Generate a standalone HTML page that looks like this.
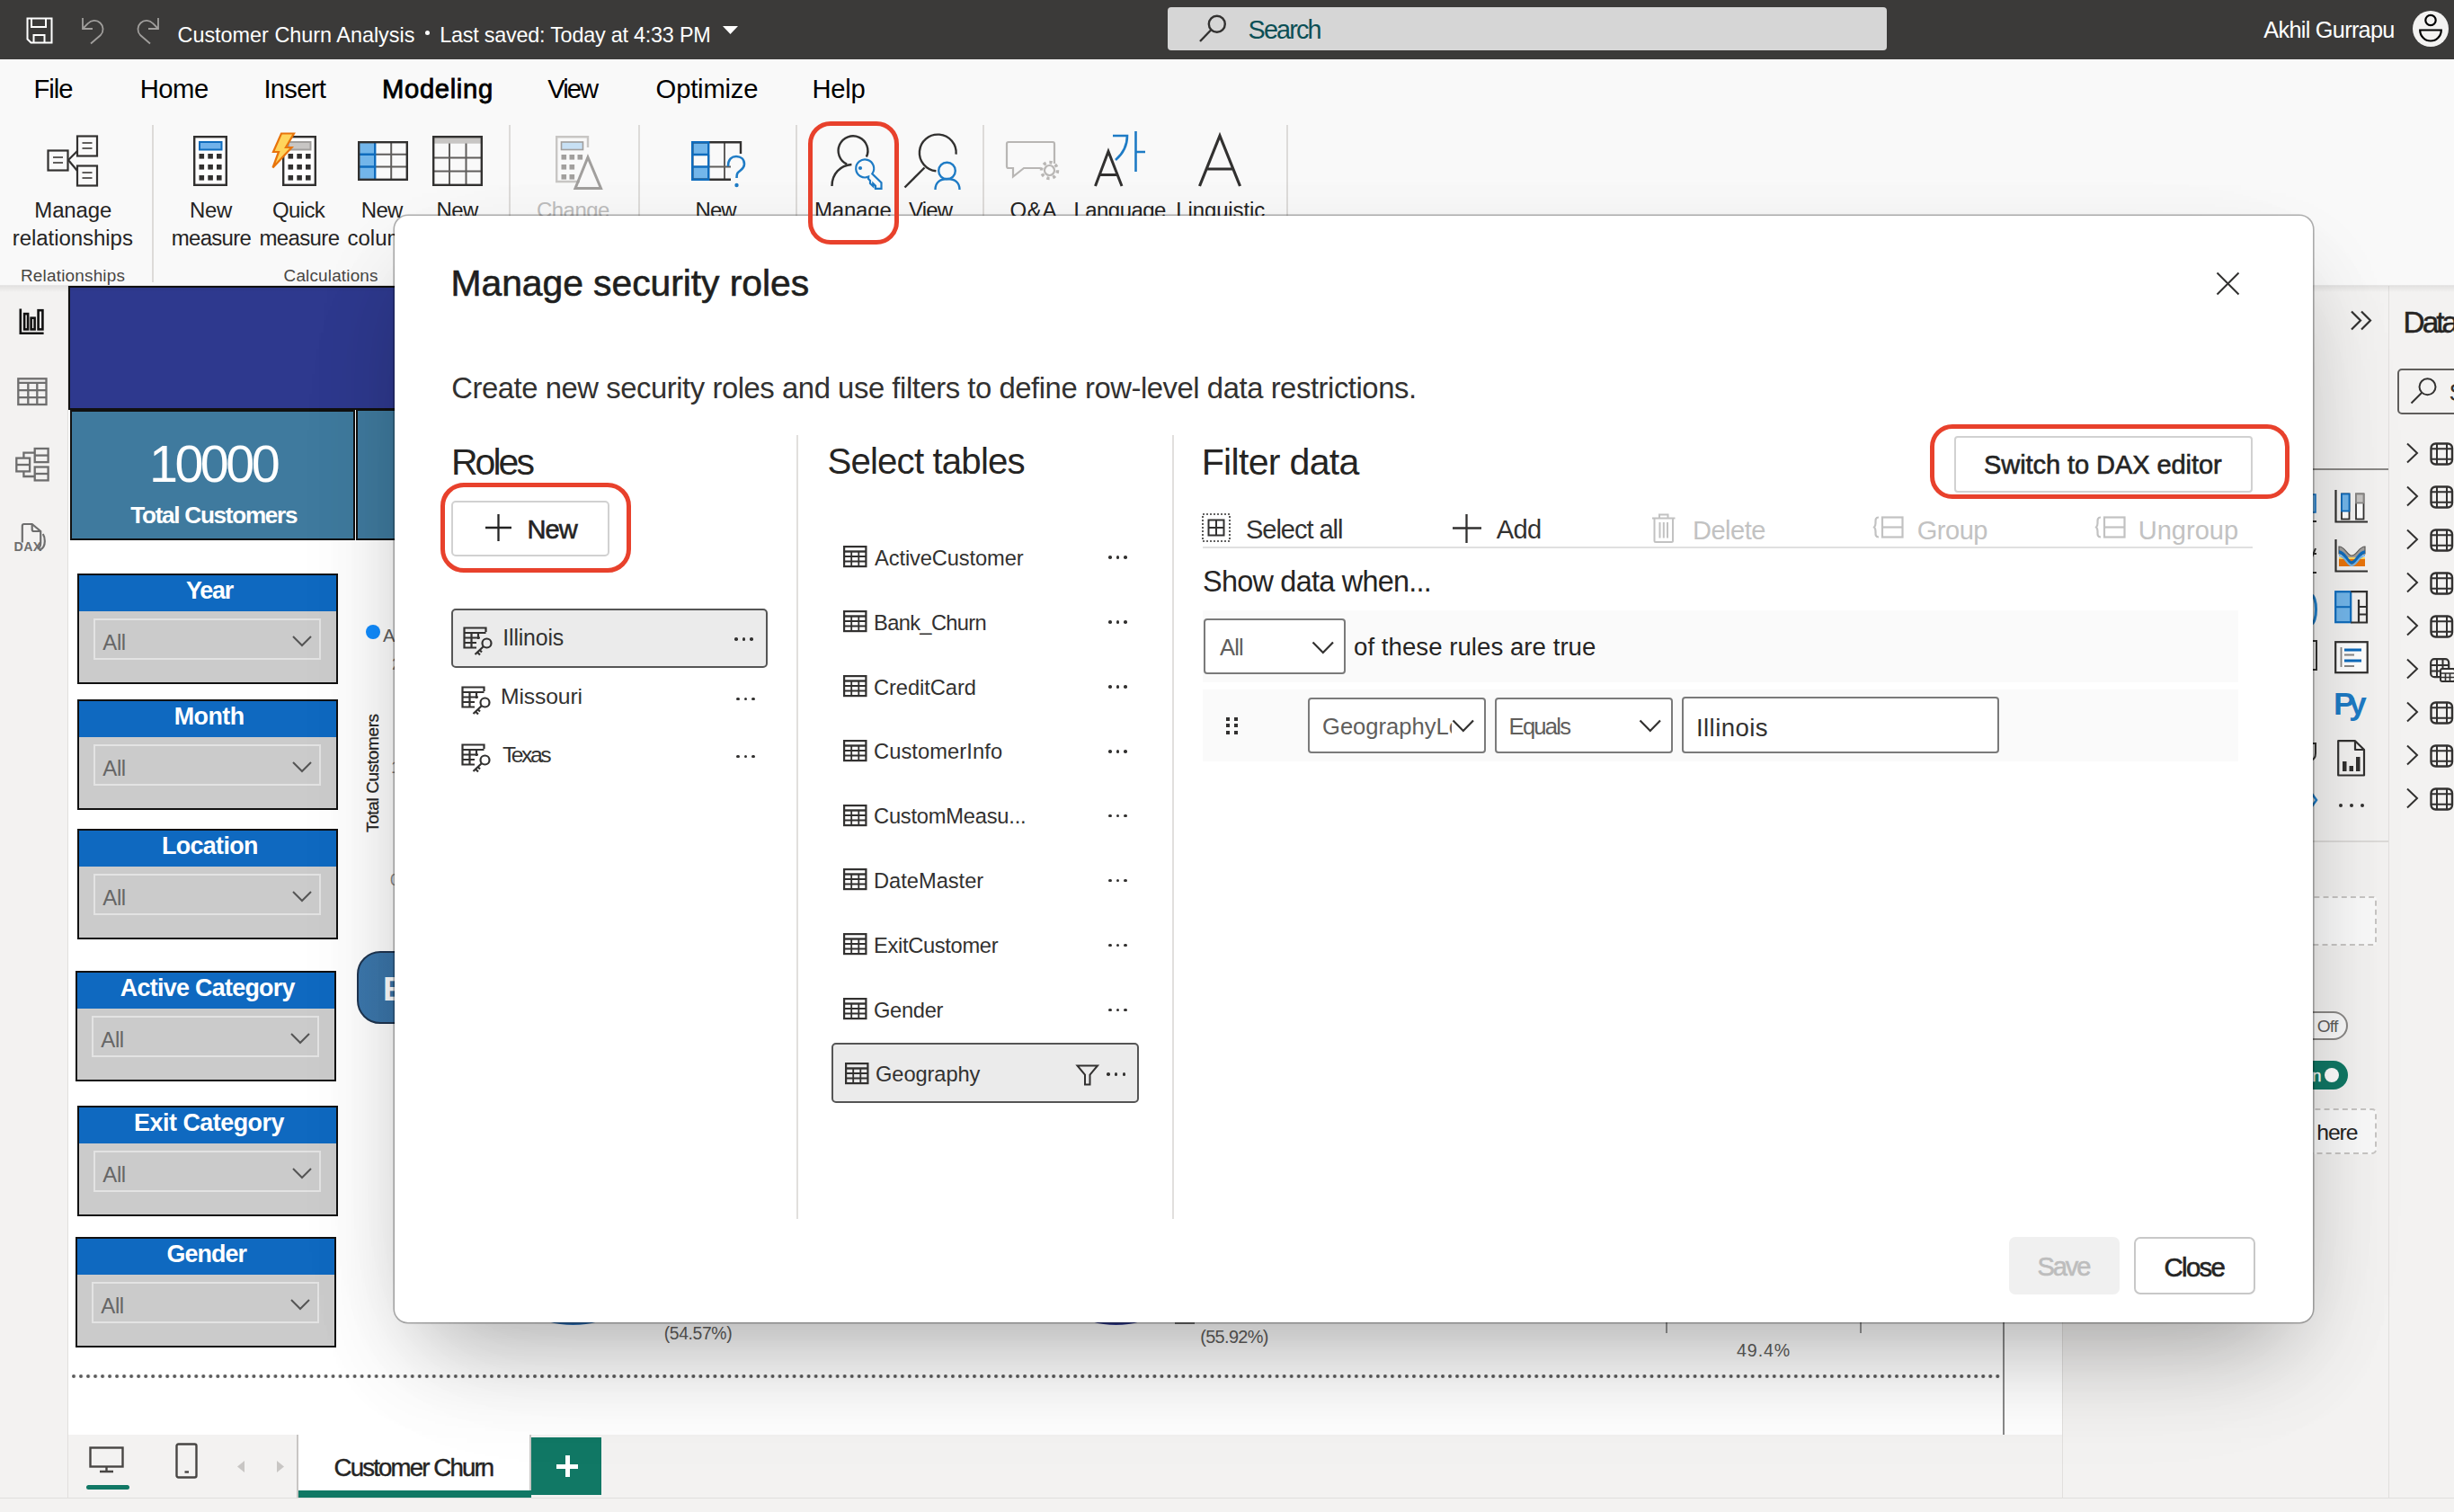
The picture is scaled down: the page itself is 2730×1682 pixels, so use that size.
<!DOCTYPE html>
<html><head><meta charset="utf-8"><style>
html,body{margin:0;padding:0;}
body{width:2730px;height:1682px;position:relative;overflow:hidden;background:#fff;font-family:"Liberation Sans",sans-serif;}
.t{position:absolute;line-height:1;white-space:nowrap;}
svg{overflow:visible;}
</style></head><body>
<div style="position:absolute;left:0px;top:0px;width:2730px;height:66px;background:#3b3a39;"></div>
<div style="position:absolute;left:0px;top:66px;width:2730px;height:252px;background:#f9f9f9;"></div>
<div style="position:absolute;left:0px;top:317px;width:2730px;height:1px;background:#e6e6e6;"></div>
<div style="position:absolute;left:0px;top:318px;width:75px;height:1364px;background:#f3f2f1;"></div>
<div style="position:absolute;left:75px;top:318px;width:1px;height:1348px;background:#e1dfdd;"></div>
<div style="position:absolute;left:76px;top:318px;width:2218px;height:1278px;background:#ffffff;"></div>
<div style="position:absolute;left:76px;top:1596px;width:2218px;height:70px;background:#f3f2f1;"></div>
<div style="position:absolute;left:0px;top:1666px;width:2730px;height:16px;background:#f3f2f1;"></div>
<div style="position:absolute;left:0px;top:1666px;width:2730px;height:1px;background:#e1dfdd;"></div>
<div style="position:absolute;left:2294px;top:318px;width:363px;height:1348px;background:#f3f2f1;"></div>
<div style="position:absolute;left:2294px;top:318px;width:1px;height:1348px;background:#e1dfdd;"></div>
<div style="position:absolute;left:2657px;top:318px;width:73px;height:1348px;background:#f3f2f1;"></div>
<div style="position:absolute;left:2657px;top:318px;width:1px;height:1348px;background:#e1dfdd;"></div>
<svg style="position:absolute;left:29px;top:19px;" width="30" height="30" viewBox="0 0 30 30"><path d="M1.5 1.5 H28.5 V28.5 H5.5 L1.5 24.5 Z" fill="none" stroke="#fff" stroke-width="2"/><path d="M6 1.5 V11 H22 V1.5" fill="none" stroke="#fff" stroke-width="2"/><path d="M8.5 28.5 V20 H20.5 V28.5" fill="none" stroke="#fff" stroke-width="2"/></svg>
<svg style="position:absolute;left:90px;top:19px;" width="28" height="30" viewBox="0 0 28 30"><path d="M2 1 V13 H13" fill="none" stroke="#a19f9d" stroke-width="1.8"/><path d="M2.5 12.5 L8 7 A9.5 9.5 0 0 1 22 20 L11 29.5" fill="none" stroke="#a19f9d" stroke-width="1.8"/></svg>
<svg style="position:absolute;left:150px;top:19px;" width="28" height="30" viewBox="0 0 28 30"><path d="M26 1 V13 H15" fill="none" stroke="#a19f9d" stroke-width="1.8"/><path d="M25.5 12.5 L20 7 A9.5 9.5 0 0 0 6 20 L17 29.5" fill="none" stroke="#a19f9d" stroke-width="1.8"/></svg>
<div class="t" style="left:197.50px;top:27.79px;font-size:23.4px;font-weight:400;color:#fff;">Customer Churn Analysis</div>
<div style="position:absolute;left:472.9px;top:34px;width:5.4px;height:5.4px;border-radius:50%;background:#fff;"></div>
<div class="t" style="left:489.20px;top:27.79px;font-size:23.4px;font-weight:400;color:#fff;letter-spacing:-0.229px;">Last saved: Today at 4:33 PM</div>
<svg style="position:absolute;left:804px;top:29px;" width="18" height="10" viewBox="0 0 18 10"><path d="M0 0 H17 L8.5 9 Z" fill="#fff"/></svg>
<div style="position:absolute;left:1299px;top:8px;width:800px;height:48px;background:#d6d6d6;border-radius:4px;"></div>
<svg style="position:absolute;left:1333px;top:16px;" width="32" height="32" viewBox="0 0 32 32"><circle cx="20.8" cy="10.7" r="9" fill="none" stroke="#323130" stroke-width="2.4"/><path d="M14.5 17 L2 30" stroke="#323130" stroke-width="2.4" fill="none"/></svg>
<div class="t" style="left:1388.60px;top:19.24px;font-size:28.78px;font-weight:400;color:#0b4f55;letter-spacing:-1.829px;">Search</div>
<div class="t" style="left:2518.30px;top:21.39px;font-size:25.29px;font-weight:400;color:#fff;letter-spacing:-0.709px;">Akhil Gurrapu</div>
<div style="position:absolute;left:2684px;top:12px;width:40px;height:40px;border-radius:50%;background:#f3f2f1;"></div>
<svg style="position:absolute;left:2684px;top:12px;" width="40" height="40" viewBox="0 0 40 40"><circle cx="20" cy="10.5" r="5.7" fill="none" stroke="#000" stroke-width="2.2"/><path d="M8.2 21.5 H31.8 A11.8 12 0 0 1 8.2 21.5 Z" fill="none" stroke="#000" stroke-width="2.2"/></svg>
<div class="t" style="left:37.50px;top:85.27px;font-size:29.22px;font-weight:400;color:#000;letter-spacing:-1.010px;">File</div>
<div class="t" style="left:155.70px;top:85.27px;font-size:29.22px;font-weight:400;color:#000;letter-spacing:-0.463px;">Home</div>
<div class="t" style="left:293.40px;top:85.27px;font-size:29.22px;font-weight:400;color:#000;letter-spacing:-0.732px;">Insert</div>
<div class="t" style="left:425.00px;top:85.27px;font-size:29.22px;font-weight:400;color:#000;letter-spacing:0.654px;-webkit-text-stroke:0.8px currentColor;">Modeling</div>
<div class="t" style="left:609.20px;top:85.27px;font-size:29.22px;font-weight:400;color:#000;letter-spacing:-1.967px;">View</div>
<div class="t" style="left:729.60px;top:85.27px;font-size:29.22px;font-weight:400;color:#000;letter-spacing:-0.190px;">Optimize</div>
<div class="t" style="left:903.50px;top:85.27px;font-size:29.22px;font-weight:400;color:#000;letter-spacing:-0.281px;">Help</div>
<div class="t" style="left:38.30px;top:221.60px;font-size:23.98px;font-weight:400;color:#252423;letter-spacing:-0.117px;">Manage</div>
<div class="t" style="left:13.80px;top:253.10px;font-size:23.98px;font-weight:400;color:#252423;letter-spacing:-0.040px;">relationships</div>
<div class="t" style="left:211.00px;top:221.60px;font-size:23.98px;font-weight:400;color:#252423;letter-spacing:-0.320px;">New</div>
<div class="t" style="left:190.70px;top:253.10px;font-size:23.98px;font-weight:400;color:#252423;letter-spacing:-0.671px;">measure</div>
<div class="t" style="left:303.00px;top:221.60px;font-size:23.98px;font-weight:400;color:#252423;letter-spacing:-0.621px;">Quick</div>
<div class="t" style="left:288.40px;top:253.10px;font-size:23.98px;font-weight:400;color:#252423;letter-spacing:-0.604px;">measure</div>
<div class="t" style="left:401.80px;top:221.60px;font-size:23.98px;font-weight:400;color:#252423;letter-spacing:-0.720px;">New</div>
<div class="t" style="left:386.50px;top:253.10px;font-size:23.98px;font-weight:400;color:#252423;">column</div>
<div class="t" style="left:485.50px;top:221.60px;font-size:23.98px;font-weight:400;color:#252423;letter-spacing:-0.620px;">New</div>
<div class="t" style="left:597.00px;top:221.60px;font-size:23.98px;font-weight:400;color:#bdbdbd;letter-spacing:-0.526px;">Change</div>
<div class="t" style="left:773.60px;top:221.60px;font-size:23.98px;font-weight:400;color:#252423;letter-spacing:-1.020px;">New</div>
<div class="t" style="left:906.00px;top:221.60px;font-size:23.98px;font-weight:400;color:#252423;letter-spacing:-0.177px;">Manage</div>
<div class="t" style="left:1011.00px;top:221.60px;font-size:23.98px;font-weight:400;color:#252423;letter-spacing:-0.803px;">View</div>
<div class="t" style="left:1123.50px;top:221.60px;font-size:23.98px;font-weight:400;color:#252423;letter-spacing:0.685px;">Q&amp;A</div>
<div class="t" style="left:1194.50px;top:221.60px;font-size:23.98px;font-weight:400;color:#252423;letter-spacing:-0.545px;">Language</div>
<div class="t" style="left:1308.30px;top:221.60px;font-size:23.98px;font-weight:400;color:#252423;letter-spacing:-0.116px;">Linguistic</div>
<div class="t" style="left:23.00px;top:297.60px;font-size:18.9px;font-weight:400;color:#484644;letter-spacing:0.211px;">Relationships</div>
<div class="t" style="left:315.60px;top:297.60px;font-size:18.9px;font-weight:400;color:#484644;letter-spacing:0.177px;">Calculations</div>
<div style="position:absolute;left:169px;top:139px;width:2px;height:175px;background:#dddbd9;"></div>
<div style="position:absolute;left:566px;top:139px;width:2px;height:175px;background:#dddbd9;"></div>
<div style="position:absolute;left:710px;top:139px;width:2px;height:175px;background:#dddbd9;"></div>
<div style="position:absolute;left:885px;top:139px;width:2px;height:175px;background:#dddbd9;"></div>
<div style="position:absolute;left:1093px;top:139px;width:2px;height:175px;background:#dddbd9;"></div>
<div style="position:absolute;left:1431px;top:139px;width:2px;height:175px;background:#dddbd9;"></div>
<svg style="position:absolute;left:52px;top:150px;" width="60" height="60" viewBox="0 0 60 60"><g fill="none" stroke="#323130" stroke-width="2.2">
<rect x="1.5" y="17.5" width="22" height="22"/><rect x="34" y="1.5" width="22" height="22"/><rect x="34" y="34.5" width="22" height="22"/>
<path d="M24 28 L34 18 M24 28 L34 40"/>
<path d="M7 25 H18 M7 31 H18 M39.5 9 H50.5 M39.5 15 H50.5 M39.5 42 H50.5 M39.5 48 H50.5" stroke="#605e5c"/></g></svg>
<svg style="position:absolute;left:215px;top:151px;" width="38" height="56" viewBox="0 0 38 56"><rect x="1.2" y="1.2" width="35.6" height="53.6" fill="#fff" stroke="#323130" stroke-width="2.4"/><rect x="7" y="7" width="24.5" height="8.5" fill="#71b2ea" stroke="#0f6cbd" stroke-width="2"/><rect x="6.5" y="20" width="5.6" height="5.6" fill="#323130"/><rect x="6.5" y="32" width="5.6" height="5.6" fill="#323130"/><rect x="6.5" y="44" width="5.6" height="5.6" fill="#323130"/><rect x="16.3" y="20" width="5.6" height="5.6" fill="#323130"/><rect x="16.3" y="32" width="5.6" height="5.6" fill="#323130"/><rect x="16.3" y="44" width="5.6" height="5.6" fill="#323130"/><rect x="26" y="20" width="5.6" height="5.6" fill="#323130"/><rect x="26" y="32" width="5.6" height="5.6" fill="#323130"/><rect x="26" y="44" width="5.6" height="5.6" fill="#323130"/></svg>
<svg style="position:absolute;left:314px;top:151px;" width="38" height="56" viewBox="0 0 38 56"><rect x="1.2" y="1.2" width="35.6" height="53.6" fill="#fff" stroke="#323130" stroke-width="2.4"/><rect x="7" y="7" width="24.5" height="8.5" fill="#c8c6c4" stroke="#a19f9d" stroke-width="2"/><rect x="6.5" y="20" width="5.6" height="5.6" fill="#323130"/><rect x="6.5" y="32" width="5.6" height="5.6" fill="#323130"/><rect x="6.5" y="44" width="5.6" height="5.6" fill="#323130"/><rect x="16.3" y="20" width="5.6" height="5.6" fill="#323130"/><rect x="16.3" y="32" width="5.6" height="5.6" fill="#323130"/><rect x="16.3" y="44" width="5.6" height="5.6" fill="#323130"/><rect x="26" y="20" width="5.6" height="5.6" fill="#323130"/><rect x="26" y="32" width="5.6" height="5.6" fill="#323130"/><rect x="26" y="44" width="5.6" height="5.6" fill="#323130"/></svg>
<svg style="position:absolute;left:301px;top:147px;" width="28" height="41" viewBox="0 0 28 41"><path d="M12 1.5 H26 L17 17 H23.5 L2.5 39.5 L9 22 H3 Z" fill="#ffd45c" stroke="#e8740c" stroke-width="2.2" stroke-linejoin="miter"/></svg>
<svg style="position:absolute;left:398px;top:157px;" width="56" height="44" viewBox="0 0 56 44"><rect x="1.2" y="1.2" width="18" height="41.6" fill="#73b6ea"/>
<g fill="none" stroke="#605e5c" stroke-width="2"><path d="M37.2 1.2 V42.8 M19.2 14.8 H54.8 M19.2 28.5 H54.8"/></g>
<g fill="none" stroke="#0f6cbd" stroke-width="2.4"><path d="M19.2 1.2 V42.8 M1.2 14.8 H19.2 M1.2 28.5 H19.2"/></g>
<rect x="1.2" y="1.2" width="53.6" height="41.6" fill="none" stroke="#323130" stroke-width="2.4"/></svg>
<svg style="position:absolute;left:481px;top:151px;" width="56" height="56" viewBox="0 0 56 56"><rect x="1.2" y="1.2" width="53.6" height="7.5" fill="#c8c6c4"/>
<g fill="none" stroke="#605e5c" stroke-width="2"><path d="M19 8.5 V54.8 M37.5 8.5 V54.8 M1.2 24.5 H54.8 M1.2 39.5 H54.8"/></g>
<rect x="1.2" y="1.2" width="53.6" height="53.6" fill="none" stroke="#323130" stroke-width="2.4"/></svg>
<svg style="position:absolute;left:618px;top:151px;" width="54" height="62" viewBox="0 0 54 62"><path d="M27 51 H1.2 V1.2 H36 V13" fill="none" stroke="#c8c6c4" stroke-width="2.4"/>
<rect x="6.5" y="7" width="24" height="8.5" fill="#c7e0f4" stroke="#a19f9d" stroke-width="1.6"/>
<g fill="#a19f9d"><rect x="6.5" y="21" width="5.6" height="5.6"/><rect x="15.5" y="21" width="5.6" height="5.6"/><rect x="24.5" y="21" width="5.6" height="5.6"/>
<rect x="6.5" y="32" width="5.6" height="5.6"/><rect x="15.5" y="32" width="5.6" height="5.6"/><rect x="6.5" y="43" width="5.6" height="5.6"/><rect x="15.5" y="43" width="5.6" height="5.6"/></g>
<path d="M36 24 L50.5 58.5 H22 Z" fill="none" stroke="#a19f9d" stroke-width="3"/></svg>
<svg style="position:absolute;left:769px;top:157px;" width="62" height="56" viewBox="0 0 62 56"><rect x="1.2" y="1.2" width="18" height="14" fill="#73b6ea"/><rect x="1.2" y="28.5" width="18" height="14" fill="#73b6ea"/>
<g fill="none" stroke="#605e5c" stroke-width="2"><path d="M19.2 15 V42.5 M37 1.2 V42.5 M19.2 28.5 H44"/></g>
<path d="M1.2 42.8 H44 M1.2 1.2 V42.8 M1.2 1.2 H55 V14" fill="none" stroke="#323130" stroke-width="2.4"/>
<path d="M1.2 1.2 H19.2 V42.8 H1.2 Z M1.2 15 H19.2 M1.2 28.5 H19.2" fill="none" stroke="#0f6cbd" stroke-width="2.4"/>
<path d="M41 28 C41 20 45.5 17 50 17 C55 17 59 20 59 25.5 C59 31 54 32.5 51.5 35.5 C50.5 37 50.5 39 50.5 41" fill="none" stroke="#1e7bc5" stroke-width="2.6"/>
<circle cx="50.5" cy="49" r="2.2" fill="#1e7bc5"/></svg>
<svg style="position:absolute;left:924px;top:150px;" width="62" height="64" viewBox="0 0 62 64"><path d="M39.9 24.6 A16.4 16.4 0 1 0 18.1 32.6" fill="none" stroke="#323130" stroke-width="2.4"/>
<path d="M23.4 33 C11 34 1.5 43 1.5 57" fill="none" stroke="#323130" stroke-width="2.4"/>
<g fill="none" stroke="#1e7bc5" stroke-width="2.2" stroke-linejoin="miter"><path d="M42.2 46.6 A10 10 0 1 1 46.3 43.3 L56.5 53.3 V59.8 H50 V56.8 L47.3 54.2 V57.2 L44 54 V50.9 L42 48.9 Z"/></g>
<circle cx="33" cy="37" r="2.1" fill="#1e7bc5"/></svg>
<svg style="position:absolute;left:1005px;top:150px;" width="64" height="64" viewBox="0 0 64 64"><path d="M58.6 21.7 A20.4 20.4 0 1 0 36.4 40.3" fill="none" stroke="#323130" stroke-width="2.4"/>
<path d="M1.5 58.5 L23.5 36.5" stroke="#323130" stroke-width="2.4"/>
<circle cx="48.5" cy="40" r="9.3" fill="none" stroke="#1e7bc5" stroke-width="2.4"/>
<path d="M35.5 61 C35.5 53 41 49 49 49 C57 49 62.5 53 62.5 61" fill="none" stroke="#1e7bc5" stroke-width="2.4"/></svg>
<svg style="position:absolute;left:1119px;top:156px;" width="62" height="46" viewBox="0 0 62 46"><path d="M3 2 H52 A2 2 0 0 1 54 4 V26 M38 31 H20 L8 40.5 V31 H3 A2 2 0 0 1 1 29 V4 A2 2 0 0 1 3 2" fill="none" stroke="#b8b6b4" stroke-width="2.2"/>
<circle cx="48.5" cy="33.5" r="5.5" fill="none" stroke="#b8b6b4" stroke-width="2.2"/>
<circle cx="48.5" cy="33.5" r="9" fill="none" stroke="#b8b6b4" stroke-width="3.5" stroke-dasharray="3.2 3.8"/></svg>
<svg style="position:absolute;left:1216px;top:150px;" width="62" height="60" viewBox="0 0 62 60"><path d="M2.5 57 L17 18.5 L32 57 M7.5 44.5 H27" fill="none" stroke="#323130" stroke-width="3"/>
<path d="M22 1 H38 C38 14 32 22 25 28" fill="none" stroke="#1e7bc5" stroke-width="2.6"/>
<path d="M47.5 -4 V41 M47.5 19 H58" fill="none" stroke="#1e7bc5" stroke-width="2.6"/></svg>
<svg style="position:absolute;left:1332px;top:150px;" width="50" height="60" viewBox="0 0 50 60"><path d="M2.5 57 L25 1 L47.5 57 M10.5 38 H40" fill="none" stroke="#323130" stroke-width="3.2"/></svg>
<svg style="position:absolute;left:21px;top:343px;" width="30" height="30" viewBox="0 0 30 30"><g fill="none" stroke="#111" stroke-width="2.6"><path d="M1.8 0.5 V27.7 H27.6"/>
<rect x="6.1" y="6.1" width="4" height="17.3"/><rect x="13.6" y="10.7" width="4" height="12.7"/><rect x="21.6" y="2.2" width="4.8" height="21.2"/></g></svg>
<svg style="position:absolute;left:19px;top:420px;" width="34" height="32" viewBox="0 0 34 32"><g fill="none" stroke="#6e6e6e" stroke-width="2.3"><rect x="1.3" y="1.3" width="31.2" height="28.7"/>
<path d="M1.3 5.8 H32.5 M1.3 14.2 H32.5 M1.3 22.1 H32.5 M12.3 5.8 V30 M22.3 5.8 V30"/></g></svg>
<svg style="position:absolute;left:17px;top:497px;" width="40" height="40" viewBox="0 0 40 40"><g fill="none" stroke="#6e6e6e" stroke-width="2.3"><rect x="1.3" y="12.6" width="14.8" height="14.8"/><path d="M1.3 20 H16.1"/>
<rect x="21.7" y="2" width="14.9" height="15.1"/><path d="M21.7 9.6 H36.6"/><rect x="21.7" y="22.5" width="14.9" height="14.9"/><path d="M21.7 30 H36.6"/>
<path d="M9.4 12.6 V6.6 H21.7 M9.4 27.4 V33 H21.7"/></g></svg>
<svg style="position:absolute;left:14px;top:580px;" width="40" height="36" viewBox="0 0 40 36"><g fill="none" stroke="#6e6e6e" stroke-width="2.2"><path d="M10.8 23.5 V5 Q10.8 3 12.8 3 H21.7 L31.2 11 V24 Q31.2 29 27.5 30.5"/>
<path d="M21.7 3 V9 Q21.7 11 23.7 11 H31.2"/><path d="M33.8 14 Q35.8 17 35.8 22 Q35.8 29.5 30 32"/></g>
<text x="1.5" y="32.8" font-family="Liberation Sans" font-weight="700" font-size="14.2" fill="#6e6e6e" letter-spacing="0.4">DAX</text></svg>
<div style="position:absolute;left:76px;top:318px;width:2153px;height:138px;background:#2e398e;box-sizing:border-box;border:2px solid #111;"></div>
<div style="position:absolute;left:78px;top:456px;width:317px;height:145px;background:#3f7a9e;box-sizing:border-box;border:2.5px solid #111;"></div>
<div style="position:absolute;left:396px;top:455px;width:330px;height:146px;background:#3f7a9e;box-sizing:border-box;border:2.5px solid #111;"></div>
<div class="t" style="left:166.00px;top:488.08px;font-size:57.56px;font-weight:400;color:#fff;letter-spacing:-3.580px;">10000</div>
<div class="t" style="left:145.30px;top:560.16px;font-size:26.16px;font-weight:700;color:#fff;letter-spacing:-1.299px;">Total Customers</div>
<div style="position:absolute;left:86px;top:638px;width:290px;height:122.5px;background:#cbcbcb;box-sizing:border-box;border:2.5px solid #111;"></div>
<div style="position:absolute;left:88px;top:640px;width:286px;height:40px;background:#0f69c0;"></div>
<div class="t" style="left:206.90px;top:644.04px;font-size:26.89px;font-weight:700;color:#fff;letter-spacing:-1.178px;">Year</div>
<div style="position:absolute;left:104px;top:688px;width:253px;height:46px;box-sizing:border-box;border:2px solid #e3e3e3;"></div>
<div class="t" style="left:114.30px;top:703.10px;font-size:23.98px;font-weight:400;color:#666;letter-spacing:-0.406px;">All</div>
<svg style="position:absolute;left:325px;top:707px;" width="22" height="12" viewBox="0 0 22 12"><path d="M1 1 L11 11 L21 1" fill="none" stroke="#555" stroke-width="2"/></svg>
<div style="position:absolute;left:86px;top:778px;width:290px;height:122.5px;background:#cbcbcb;box-sizing:border-box;border:2.5px solid #111;"></div>
<div style="position:absolute;left:88px;top:780px;width:286px;height:40px;background:#0f69c0;"></div>
<div class="t" style="left:193.70px;top:784.04px;font-size:26.89px;font-weight:700;color:#fff;letter-spacing:-0.542px;">Month</div>
<div style="position:absolute;left:104px;top:828px;width:253px;height:46px;box-sizing:border-box;border:2px solid #e3e3e3;"></div>
<div class="t" style="left:114.30px;top:843.10px;font-size:23.98px;font-weight:400;color:#666;letter-spacing:-0.406px;">All</div>
<svg style="position:absolute;left:325px;top:847px;" width="22" height="12" viewBox="0 0 22 12"><path d="M1 1 L11 11 L21 1" fill="none" stroke="#555" stroke-width="2"/></svg>
<div style="position:absolute;left:86px;top:922px;width:290px;height:122.5px;background:#cbcbcb;box-sizing:border-box;border:2.5px solid #111;"></div>
<div style="position:absolute;left:88px;top:924px;width:286px;height:40px;background:#0f69c0;"></div>
<div class="t" style="left:180.00px;top:928.04px;font-size:26.89px;font-weight:700;color:#fff;letter-spacing:-0.651px;">Location</div>
<div style="position:absolute;left:104px;top:972px;width:253px;height:46px;box-sizing:border-box;border:2px solid #e3e3e3;"></div>
<div class="t" style="left:114.30px;top:987.10px;font-size:23.98px;font-weight:400;color:#666;letter-spacing:-0.406px;">All</div>
<svg style="position:absolute;left:325px;top:991px;" width="22" height="12" viewBox="0 0 22 12"><path d="M1 1 L11 11 L21 1" fill="none" stroke="#555" stroke-width="2"/></svg>
<div style="position:absolute;left:84px;top:1080px;width:290px;height:122.5px;background:#cbcbcb;box-sizing:border-box;border:2.5px solid #111;"></div>
<div style="position:absolute;left:86px;top:1082px;width:286px;height:40px;background:#0f69c0;"></div>
<div class="t" style="left:133.85px;top:1086.04px;font-size:26.89px;font-weight:700;color:#fff;letter-spacing:-0.712px;">Active Category</div>
<div style="position:absolute;left:102px;top:1130px;width:253px;height:46px;box-sizing:border-box;border:2px solid #e3e3e3;"></div>
<div class="t" style="left:112.30px;top:1145.10px;font-size:23.98px;font-weight:400;color:#666;letter-spacing:-0.406px;">All</div>
<svg style="position:absolute;left:323px;top:1149px;" width="22" height="12" viewBox="0 0 22 12"><path d="M1 1 L11 11 L21 1" fill="none" stroke="#555" stroke-width="2"/></svg>
<div style="position:absolute;left:86px;top:1230px;width:290px;height:122.5px;background:#cbcbcb;box-sizing:border-box;border:2.5px solid #111;"></div>
<div style="position:absolute;left:88px;top:1232px;width:286px;height:40px;background:#0f69c0;"></div>
<div class="t" style="left:149.10px;top:1236.04px;font-size:26.89px;font-weight:700;color:#fff;letter-spacing:-0.491px;">Exit Category</div>
<div style="position:absolute;left:104px;top:1280px;width:253px;height:46px;box-sizing:border-box;border:2px solid #e3e3e3;"></div>
<div class="t" style="left:114.30px;top:1295.10px;font-size:23.98px;font-weight:400;color:#666;letter-spacing:-0.406px;">All</div>
<svg style="position:absolute;left:325px;top:1299px;" width="22" height="12" viewBox="0 0 22 12"><path d="M1 1 L11 11 L21 1" fill="none" stroke="#555" stroke-width="2"/></svg>
<div style="position:absolute;left:84px;top:1376px;width:290px;height:122.5px;background:#cbcbcb;box-sizing:border-box;border:2.5px solid #111;"></div>
<div style="position:absolute;left:86px;top:1378px;width:286px;height:40px;background:#0f69c0;"></div>
<div class="t" style="left:185.60px;top:1382.04px;font-size:26.89px;font-weight:700;color:#fff;letter-spacing:-0.926px;">Gender</div>
<div style="position:absolute;left:102px;top:1426px;width:253px;height:46px;box-sizing:border-box;border:2px solid #e3e3e3;"></div>
<div class="t" style="left:112.30px;top:1441.10px;font-size:23.98px;font-weight:400;color:#666;letter-spacing:-0.406px;">All</div>
<svg style="position:absolute;left:323px;top:1445px;" width="22" height="12" viewBox="0 0 22 12"><path d="M1 1 L11 11 L21 1" fill="none" stroke="#555" stroke-width="2"/></svg>
<div style="position:absolute;left:407px;top:695px;width:16px;height:16px;border-radius:50%;background:#118dff;"></div>
<div class="t" style="left:426.00px;top:696.57px;font-size:20.35px;font-weight:400;color:#605e5c;">Active</div>
<div class="t" style="left:436.00px;top:729.80px;font-size:18.9px;font-weight:400;color:#8a8886;">2</div>
<div class="t" style="left:435.00px;top:844.80px;font-size:18.9px;font-weight:400;color:#8a8886;">1</div>
<div class="t" style="left:434.00px;top:969.80px;font-size:18.9px;font-weight:400;color:#8a8886;">0</div>
<div class="t" style="left:405px;top:925.5px;font-size:19px;color:#252423;transform:rotate(-90deg);transform-origin:0 0;letter-spacing:-0.37px;-webkit-text-stroke:0.3px currentColor;">Total Customers</div>
<div style="position:absolute;left:397px;top:1058px;width:120px;height:81px;background:linear-gradient(90deg,#3c78ad,#3a6f9f);border:2px solid #1f3550;border-radius:26px;box-sizing:border-box;"></div>
<div class="t" style="left:426.00px;top:1083.04px;font-size:36.34px;font-weight:700;color:#fff;">E</div>
<div class="t" style="left:738.70px;top:1473.64px;font-size:19.33px;font-weight:400;color:#605e5c;letter-spacing:-0.356px;">(54.57%)</div>
<div class="t" style="left:1335.20px;top:1478.05px;font-size:19.91px;font-weight:400;color:#605e5c;letter-spacing:-0.649px;">(55.92%)</div>
<div class="t" style="left:1932.00px;top:1492.69px;font-size:19.62px;font-weight:400;color:#605e5c;letter-spacing:0.909px;">49.4%</div>
<div style="position:absolute;left:1853px;top:1470px;width:2px;height:13px;background:#999;"></div>
<div style="position:absolute;left:2069px;top:1470px;width:2px;height:13px;background:#999;"></div>
<div style="position:absolute;left:600px;top:1462px;width:75px;height:12px;border-radius:0 0 50% 50%/0 0 100% 100%;background:#2a6db5;"></div>
<div style="position:absolute;left:1205px;top:1462px;width:73px;height:12px;border-radius:0 0 50% 50%/0 0 100% 100%;background:#2e398e;"></div>
<div style="position:absolute;left:1307px;top:1470px;width:22px;height:3px;background:#777;"></div>
<svg style="position:absolute;left:80px;top:1529px;" width="2148" height="4" viewBox="0 0 2148 4"><defs><pattern id="dp" x="0" y="0" width="8.016" height="4" patternUnits="userSpaceOnUse"><circle cx="2" cy="2" r="2" fill="#5a5a5a"/></pattern></defs><rect x="0" y="0" width="2148" height="4" fill="url(#dp)"/></svg>
<div style="position:absolute;left:2228px;top:318px;width:2px;height:1278px;background:#8a8a8a;"></div>
<svg style="position:absolute;left:99px;top:1609px;" width="40" height="30" viewBox="0 0 40 30"><g fill="none" stroke="#484644" stroke-width="2.4"><rect x="1.5" y="1.5" width="36" height="21"/><path d="M19.5 22.5 V27.5 M12 28 H27"/></g></svg>
<div style="position:absolute;left:96px;top:1651.5px;width:48px;height:5px;background:#117865;border-radius:3px;"></div>
<svg style="position:absolute;left:195px;top:1605px;" width="26" height="40" viewBox="0 0 26 40"><g fill="none" stroke="#484644" stroke-width="2.4"><rect x="1.5" y="1.5" width="22" height="37" rx="2"/><path d="M10.5 32.5 H15"/></g></svg>
<svg style="position:absolute;left:262px;top:1624px;" width="12" height="15" viewBox="0 0 12 15"><path d="M10 1 L2 7.5 L10 14 Z" fill="#c8c6c4"/></svg>
<svg style="position:absolute;left:306px;top:1624px;" width="12" height="15" viewBox="0 0 12 15"><path d="M2 1 L10 7.5 L2 14 Z" fill="#c8c6c4"/></svg>
<div style="position:absolute;left:330px;top:1596px;width:2px;height:70px;background:#c8c6c4;"></div>
<div style="position:absolute;left:332px;top:1596px;width:258px;height:70px;background:#fff;"></div>
<div style="position:absolute;left:332px;top:1658px;width:259px;height:8px;background:#117865;"></div>
<div style="position:absolute;left:589px;top:1596px;width:2px;height:62px;background:#c8c6c4;"></div>
<div class="t" style="left:371.60px;top:1619.12px;font-size:27.62px;font-weight:400;color:#252423;letter-spacing:-1.845px;-webkit-text-stroke:0.4px currentColor;">Customer Churn</div>
<div style="position:absolute;left:591px;top:1599px;width:78px;height:64px;background:#117865;"></div>
<div style="position:absolute;left:619px;top:1628.5px;width:24px;height:5px;background:#fff;"></div>
<div style="position:absolute;left:628.5px;top:1619px;width:5px;height:24px;background:#fff;"></div>
<svg style="position:absolute;left:2614px;top:345px;" width="28" height="24" viewBox="0 0 28 24"><path d="M2 1.5 L12 11.5 L2 21.5 M13 1.5 L23 11.5 L13 21.5" fill="none" stroke="#323130" stroke-width="2.2"/></svg>
<div style="position:absolute;left:2295px;top:521px;width:362px;height:2px;background:#8a8886;"></div>
<div style="position:absolute;left:2295px;top:935px;width:362px;height:2px;background:#dcdad8;"></div>
<svg style="position:absolute;left:2597px;top:545px;" width="38" height="37" viewBox="0 0 38 37"><path d="M1.5 0 V35.5 H37" fill="none" stroke="#323130" stroke-width="2.2"/>
<rect x="8" y="4.5" width="8.5" height="28" fill="#fff" stroke="#323130" stroke-width="1.8"/><rect x="8" y="4.5" width="8.5" height="19" fill="#73b6ea" stroke="#0f6cbd" stroke-width="1.8"/>
<rect x="24" y="4.5" width="8.5" height="28" fill="#fff" stroke="#323130" stroke-width="1.8"/><rect x="24" y="4.5" width="8.5" height="10" fill="#c8c6c4" stroke="#8a8886" stroke-width="1.8"/></svg>
<svg style="position:absolute;left:2597px;top:600px;" width="38" height="38" viewBox="0 0 38 38"><path d="M1.5 0 V35.5 H37" fill="none" stroke="#323130" stroke-width="2.2"/>
<path d="M5 8 C12 8 14 18 19 18 C25 18 27 8 34 8 V16 C27 16 25 26 19 26 C14 26 12 16 5 16 Z" fill="#a19f9d" stroke="#605e5c" stroke-width="1.2"/>
<rect x="5" y="21" width="29" height="9" fill="#e8740c"/><path d="M5 21 H34" stroke="#ffd45c" stroke-width="2"/>
<path d="M5 14 C12 14 14 26 19 26 C25 26 27 14 34 14" fill="none" stroke="#0f6cbd" stroke-width="3.5"/>
<path d="M5 18 C12 18 14 29 19 29 C25 29 27 18 34 18" fill="none" stroke="#73b6ea" stroke-width="2"/></svg>
<svg style="position:absolute;left:2597px;top:657px;" width="38" height="37" viewBox="0 0 38 37"><rect x="1.2" y="1.2" width="17" height="34" fill="#73b6ea" stroke="#0f6cbd" stroke-width="2.2"/>
<path d="M1.2 18.2 H18" stroke="#0f6cbd" stroke-width="2"/>
<path d="M18.2 1.2 H36 V35.5 H18.2 M27 10 V35.5 M27 18 H36 M27 26.5 H36" fill="none" stroke="#323130" stroke-width="2.2"/></svg>
<svg style="position:absolute;left:2597px;top:713px;" width="38" height="37" viewBox="0 0 38 37"><rect x="1.2" y="1.2" width="35.5" height="34" fill="#fff" stroke="#323130" stroke-width="2.2"/>
<path d="M7.5 7 V29" stroke="#8a8886" stroke-width="1.8"/>
<path d="M11 10 H30 M11 22 H30" stroke="#0f6cbd" stroke-width="3.2"/><path d="M11 15.5 H22 M11 28 H22" stroke="#8a8886" stroke-width="1.8"/></svg>
<div class="t" style="left:2596.00px;top:766.16px;font-size:35.61px;font-weight:700;color:#1e7bc5;letter-spacing:-6.751px;">Py</div>
<svg style="position:absolute;left:2600px;top:823px;" width="32" height="41" viewBox="0 0 32 41"><path d="M1.2 1.2 H20 L30 11 V39.5 H1.2 Z M20 1.2 V11 H30" fill="none" stroke="#323130" stroke-width="2.2" stroke-linejoin="round"/>
<rect x="6" y="24" width="4.5" height="11" fill="#323130"/><rect x="13.5" y="29" width="4.5" height="6" fill="#323130"/><rect x="21" y="19" width="4.5" height="16" fill="#323130"/></svg>
<div style="position:absolute;left:2601.9px;top:893.7px;width:4px;height:4px;border-radius:50%;background:#323130;"></div>
<div style="position:absolute;left:2613.8px;top:893.7px;width:4px;height:4px;border-radius:50%;background:#323130;"></div>
<div style="position:absolute;left:2625.7px;top:893.7px;width:4px;height:4px;border-radius:50%;background:#323130;"></div>
<svg style="position:absolute;left:2570px;top:540px;" width="12" height="380" viewBox="0 0 12 380"><rect x="2" y="10" width="4" height="20" fill="#73b6ea" stroke="#0f6cbd" stroke-width="1.5"/>
<path d="M0 40 H7" stroke="#323130" stroke-width="2"/><path d="M6 70 L2 80 M0 76 H7 M0 97 H7" stroke="#323130" stroke-width="2"/>
<path d="M1.5 122 A5 16 0 0 1 1.5 154" fill="none" stroke="#1e7bc5" stroke-width="3"/>
<path d="M0 173 H7 V205 H0" fill="none" stroke="#323130" stroke-width="2"/>
<path d="M0 287 H6 V298 Q6 305 0 306" fill="none" stroke="#323130" stroke-width="2"/>
<path d="M2 343 L7 350 L2 357" fill="none" stroke="#1e7bc5" stroke-width="2.5"/></svg>
<div style="position:absolute;left:2540px;top:997px;width:104px;height:55px;box-sizing:border-box;border:2px dashed #c8c6c4;border-radius:4px;background:#fafafa;"></div>
<div style="position:absolute;left:2520px;top:1125px;width:92px;height:31.5px;box-sizing:border-box;border:2px solid #8a8886;border-radius:16px;background:#fafafa;"></div>
<div class="t" style="left:2577.80px;top:1132.26px;font-size:19.19px;font-weight:400;color:#605e5c;letter-spacing:-0.854px;">Off</div>
<div style="position:absolute;left:2520px;top:1180.4px;width:92px;height:31.4px;border-radius:16px;background:#117865;"></div>
<div style="position:absolute;left:2585.7px;top:1187.9px;width:16.4px;height:16.4px;border-radius:50%;background:#fff;"></div>
<div class="t" style="left:2572.00px;top:1187.80px;font-size:18.9px;font-weight:400;color:#fff;-webkit-text-stroke:0.4px currentColor;">n</div>
<div style="position:absolute;left:2540px;top:1232.5px;width:103.5px;height:51px;box-sizing:border-box;border:2px dashed #c8c6c4;border-radius:5px;background:#fafafa;"></div>
<div class="t" style="left:2577.20px;top:1247.58px;font-size:24.71px;font-weight:400;color:#252423;letter-spacing:-1.035px;">here</div>
<div class="t" style="left:2673.50px;top:342.10px;font-size:33.43px;font-weight:400;color:#252423;letter-spacing:-3.003px;-webkit-text-stroke:0.5px currentColor;">Data</div>
<div style="position:absolute;left:2666.5px;top:410px;width:80px;height:51px;box-sizing:border-box;border:2px solid #605e5c;border-radius:5px;background:#f3f2f1;"></div>
<svg style="position:absolute;left:2681px;top:419px;" width="30" height="32" viewBox="0 0 30 32"><circle cx="19.5" cy="11.3" r="9" fill="none" stroke="#323130" stroke-width="2"/><path d="M13 18 L1.5 29.5" stroke="#323130" stroke-width="2"/></svg>
<div class="t" style="left:2724.40px;top:423.42px;font-size:27.62px;font-weight:400;color:#323130;">S</div>
<svg style="position:absolute;left:2676px;top:492px;" width="16" height="24" viewBox="0 0 16 24"><path d="M2 1.5 L13 12 L2 22.5" fill="none" stroke="#323130" stroke-width="2"/></svg>
<svg style="position:absolute;left:2703px;top:492px;" width="28" height="26" viewBox="0 0 28 26"><rect x="1.5" y="1.5" width="23.5" height="23" rx="5" fill="none" stroke="#323130" stroke-width="2.4"/><path d="M8 1.5 V24.5 M19 1.5 V24.5 M1.5 7.2 H25 M1.5 18.8 H25" stroke="#323130" stroke-width="2"/></svg>
<svg style="position:absolute;left:2676px;top:540px;" width="16" height="24" viewBox="0 0 16 24"><path d="M2 1.5 L13 12 L2 22.5" fill="none" stroke="#323130" stroke-width="2"/></svg>
<svg style="position:absolute;left:2703px;top:540px;" width="28" height="26" viewBox="0 0 28 26"><rect x="1.5" y="1.5" width="23.5" height="23" rx="5" fill="none" stroke="#323130" stroke-width="2.4"/><path d="M8 1.5 V24.5 M19 1.5 V24.5 M1.5 7.2 H25 M1.5 18.8 H25" stroke="#323130" stroke-width="2"/></svg>
<svg style="position:absolute;left:2676px;top:588px;" width="16" height="24" viewBox="0 0 16 24"><path d="M2 1.5 L13 12 L2 22.5" fill="none" stroke="#323130" stroke-width="2"/></svg>
<svg style="position:absolute;left:2703px;top:588px;" width="28" height="26" viewBox="0 0 28 26"><rect x="1.5" y="1.5" width="23.5" height="23" rx="5" fill="none" stroke="#323130" stroke-width="2.4"/><path d="M8 1.5 V24.5 M19 1.5 V24.5 M1.5 7.2 H25 M1.5 18.8 H25" stroke="#323130" stroke-width="2"/></svg>
<svg style="position:absolute;left:2676px;top:636px;" width="16" height="24" viewBox="0 0 16 24"><path d="M2 1.5 L13 12 L2 22.5" fill="none" stroke="#323130" stroke-width="2"/></svg>
<svg style="position:absolute;left:2703px;top:636px;" width="28" height="26" viewBox="0 0 28 26"><rect x="1.5" y="1.5" width="23.5" height="23" rx="5" fill="none" stroke="#323130" stroke-width="2.4"/><path d="M8 1.5 V24.5 M19 1.5 V24.5 M1.5 7.2 H25 M1.5 18.8 H25" stroke="#323130" stroke-width="2"/></svg>
<svg style="position:absolute;left:2676px;top:684px;" width="16" height="24" viewBox="0 0 16 24"><path d="M2 1.5 L13 12 L2 22.5" fill="none" stroke="#323130" stroke-width="2"/></svg>
<svg style="position:absolute;left:2703px;top:684px;" width="28" height="26" viewBox="0 0 28 26"><rect x="1.5" y="1.5" width="23.5" height="23" rx="5" fill="none" stroke="#323130" stroke-width="2.4"/><path d="M8 1.5 V24.5 M19 1.5 V24.5 M1.5 7.2 H25 M1.5 18.8 H25" stroke="#323130" stroke-width="2"/></svg>
<svg style="position:absolute;left:2676px;top:732px;" width="16" height="24" viewBox="0 0 16 24"><path d="M2 1.5 L13 12 L2 22.5" fill="none" stroke="#323130" stroke-width="2"/></svg>
<svg style="position:absolute;left:2703px;top:732px;" width="30" height="28" viewBox="0 0 30 28"><rect x="1.2" y="1.2" width="20" height="20" rx="4" fill="none" stroke="#323130" stroke-width="2.2"/><path d="M8 1.2 V21 M14.5 1.2 V12 M1.2 8 H21 M1.2 14.5 H12" stroke="#323130" stroke-width="2"/>
<rect x="12" y="12" width="16" height="14" rx="2" fill="#f3f2f1" stroke="#323130" stroke-width="2"/><path d="M12 17 H28 M12 21.5 H28 M17.5 17 V26 M22.5 17 V26" stroke="#323130" stroke-width="1.6"/></svg>
<svg style="position:absolute;left:2676px;top:780px;" width="16" height="24" viewBox="0 0 16 24"><path d="M2 1.5 L13 12 L2 22.5" fill="none" stroke="#323130" stroke-width="2"/></svg>
<svg style="position:absolute;left:2703px;top:780px;" width="28" height="26" viewBox="0 0 28 26"><rect x="1.5" y="1.5" width="23.5" height="23" rx="5" fill="none" stroke="#323130" stroke-width="2.4"/><path d="M8 1.5 V24.5 M19 1.5 V24.5 M1.5 7.2 H25 M1.5 18.8 H25" stroke="#323130" stroke-width="2"/></svg>
<svg style="position:absolute;left:2676px;top:828px;" width="16" height="24" viewBox="0 0 16 24"><path d="M2 1.5 L13 12 L2 22.5" fill="none" stroke="#323130" stroke-width="2"/></svg>
<svg style="position:absolute;left:2703px;top:828px;" width="28" height="26" viewBox="0 0 28 26"><rect x="1.5" y="1.5" width="23.5" height="23" rx="5" fill="none" stroke="#323130" stroke-width="2.4"/><path d="M8 1.5 V24.5 M19 1.5 V24.5 M1.5 7.2 H25 M1.5 18.8 H25" stroke="#323130" stroke-width="2"/></svg>
<svg style="position:absolute;left:2676px;top:876px;" width="16" height="24" viewBox="0 0 16 24"><path d="M2 1.5 L13 12 L2 22.5" fill="none" stroke="#323130" stroke-width="2"/></svg>
<svg style="position:absolute;left:2703px;top:876px;" width="28" height="26" viewBox="0 0 28 26"><rect x="1.5" y="1.5" width="23.5" height="23" rx="5" fill="none" stroke="#323130" stroke-width="2.4"/><path d="M8 1.5 V24.5 M19 1.5 V24.5 M1.5 7.2 H25 M1.5 18.8 H25" stroke="#323130" stroke-width="2"/></svg>
<div style="position:absolute;left:0px;top:318px;width:2730px;height:7px;background:linear-gradient(rgba(0,0,0,0.07),rgba(0,0,0,0));"></div>
<div style="position:absolute;left:438.5px;top:240px;width:2134.5px;height:1231px;background:#fff;border-radius:15px;box-shadow:0 0 0 1.6px rgba(0,0,0,0.30),0 50px 100px -30px rgba(0,0,0,0.30),0 60px 160px -40px rgba(0,0,0,0.08);"></div>
<div class="t" style="left:501.50px;top:294.53px;font-size:40.84px;font-weight:400;color:#201f1e;letter-spacing:-0.039px;-webkit-text-stroke:0.6px currentColor;">Manage security roles</div>
<svg style="position:absolute;left:2465px;top:302px;" width="27" height="27" viewBox="0 0 27 27"><path d="M1.5 1.5 L25.5 25.5 M25.5 1.5 L1.5 25.5" stroke="#323130" stroke-width="2"/></svg>
<div class="t" style="left:502.20px;top:415.79px;font-size:32.85px;font-weight:400;color:#323130;letter-spacing:-0.449px;">Create new security roles and use filters to define row-level data restrictions.</div>
<div class="t" style="left:501.90px;top:493.90px;font-size:40.99px;font-weight:400;color:#252423;letter-spacing:-2.923px;">Roles</div>
<div class="t" style="left:920.50px;top:494.42px;font-size:40.26px;font-weight:400;color:#252423;letter-spacing:-0.861px;">Select tables</div>
<div class="t" style="left:1336.70px;top:493.98px;font-size:41.13px;font-weight:400;color:#252423;letter-spacing:-0.718px;">Filter data</div>
<div style="position:absolute;left:886px;top:484px;width:2px;height:872px;background:#e1dfdd;"></div>
<div style="position:absolute;left:1304px;top:484px;width:2px;height:872px;background:#e1dfdd;"></div>
<div style="position:absolute;left:502.3px;top:556.5px;width:176.2px;height:62.5px;box-sizing:border-box;border:2px solid #d1d1d1;border-radius:5px;background:#fff;"></div>
<svg style="position:absolute;left:539px;top:571px;" width="32" height="32" viewBox="0 0 32 32"><path d="M15.5 1 V31 M1 16 H30" stroke="#242424" stroke-width="2.3"/></svg>
<div class="t" style="left:586.60px;top:575.19px;font-size:29.07px;font-weight:400;color:#242424;letter-spacing:-1.026px;-webkit-text-stroke:0.6px currentColor;">New</div>
<div style="position:absolute;left:502.2px;top:676.6px;width:351.4px;height:66.7px;box-sizing:border-box;border:2.5px solid #555;border-radius:5px;background:#ebebeb;"></div>
<svg style="position:absolute;left:515px;top:697px;" width="34" height="32" viewBox="0 0 34 32"><g fill="none" stroke="#323130" stroke-width="2.2">
<path d="M25.5 6 V1.5 H1.5 V23.5 H15"/><path d="M1.5 7 H25.5 M1.5 12.5 H19 M1.5 18 H15 M9.5 7 V23.5 M17 7 V14"/>
<circle cx="26.5" cy="18.5" r="5"/><path d="M23 22 L13.5 31 M16 28.5 L19 31.5 M18.5 26 L21 28.5"/></g></svg>
<div class="t" style="left:559.30px;top:697.56px;font-size:24.85px;font-weight:400;color:#323130;letter-spacing:-0.159px;">Illinois</div>
<svg style="position:absolute;left:513px;top:763px;" width="34" height="32" viewBox="0 0 34 32"><g fill="none" stroke="#323130" stroke-width="2.2">
<path d="M25.5 6 V1.5 H1.5 V23.5 H15"/><path d="M1.5 7 H25.5 M1.5 12.5 H19 M1.5 18 H15 M9.5 7 V23.5 M17 7 V14"/>
<circle cx="26.5" cy="18.5" r="5"/><path d="M23 22 L13.5 31 M16 28.5 L19 31.5 M18.5 26 L21 28.5"/></g></svg>
<div class="t" style="left:557.00px;top:763.48px;font-size:24.71px;font-weight:400;color:#323130;letter-spacing:-0.139px;">Missouri</div>
<svg style="position:absolute;left:513px;top:827px;" width="34" height="32" viewBox="0 0 34 32"><g fill="none" stroke="#323130" stroke-width="2.2">
<path d="M25.5 6 V1.5 H1.5 V23.5 H15"/><path d="M1.5 7 H25.5 M1.5 12.5 H19 M1.5 18 H15 M9.5 7 V23.5 M17 7 V14"/>
<circle cx="26.5" cy="18.5" r="5"/><path d="M23 22 L13.5 31 M16 28.5 L19 31.5 M18.5 26 L21 28.5"/></g></svg>
<div class="t" style="left:559.00px;top:827.58px;font-size:24.71px;font-weight:400;color:#323130;letter-spacing:-2.495px;">Texas</div>
<div style="position:absolute;left:817.0px;top:709.0px;width:3.6px;height:3.6px;border-radius:50%;background:#323130;"></div>
<div style="position:absolute;left:825.6px;top:709.0px;width:3.6px;height:3.6px;border-radius:50%;background:#323130;"></div>
<div style="position:absolute;left:834.2px;top:709.0px;width:3.6px;height:3.6px;border-radius:50%;background:#323130;"></div>
<div style="position:absolute;left:819.0px;top:775.7px;width:3.6px;height:3.6px;border-radius:50%;background:#323130;"></div>
<div style="position:absolute;left:827.6px;top:775.7px;width:3.6px;height:3.6px;border-radius:50%;background:#323130;"></div>
<div style="position:absolute;left:836.2px;top:775.7px;width:3.6px;height:3.6px;border-radius:50%;background:#323130;"></div>
<div style="position:absolute;left:819.0px;top:839.8px;width:3.6px;height:3.6px;border-radius:50%;background:#323130;"></div>
<div style="position:absolute;left:827.6px;top:839.8px;width:3.6px;height:3.6px;border-radius:50%;background:#323130;"></div>
<div style="position:absolute;left:836.2px;top:839.8px;width:3.6px;height:3.6px;border-radius:50%;background:#323130;"></div>
<svg style="position:absolute;left:938px;top:607px;" width="27" height="25" viewBox="0 0 27 25"><g fill="none" stroke="#323130"><rect x="1.1" y="1.1" width="24.3" height="22" stroke-width="2.2"/>
<path d="M1.1 6.5 H25.4" stroke-width="2.4"/><path d="M1.1 12 H25.4 M1.1 17.5 H25.4 M9.2 6.5 V23 M17.3 6.5 V23" stroke-width="1.8"/></g></svg>
<div class="t" style="left:973.00px;top:609.75px;font-size:23.69px;font-weight:400;color:#323130;letter-spacing:-0.115px;">ActiveCustomer</div>
<div style="position:absolute;left:1233.0px;top:618.3px;width:3.6px;height:3.6px;border-radius:50%;background:#323130;"></div>
<div style="position:absolute;left:1241.6px;top:618.3px;width:3.6px;height:3.6px;border-radius:50%;background:#323130;"></div>
<div style="position:absolute;left:1250.2px;top:618.3px;width:3.6px;height:3.6px;border-radius:50%;background:#323130;"></div>
<svg style="position:absolute;left:938px;top:679px;" width="27" height="25" viewBox="0 0 27 25"><g fill="none" stroke="#323130"><rect x="1.1" y="1.1" width="24.3" height="22" stroke-width="2.2"/>
<path d="M1.1 6.5 H25.4" stroke-width="2.4"/><path d="M1.1 12 H25.4 M1.1 17.5 H25.4 M9.2 6.5 V23 M17.3 6.5 V23" stroke-width="1.8"/></g></svg>
<div class="t" style="left:972.00px;top:681.65px;font-size:23.69px;font-weight:400;color:#323130;letter-spacing:-0.656px;">Bank_Churn</div>
<div style="position:absolute;left:1233.0px;top:690.2px;width:3.6px;height:3.6px;border-radius:50%;background:#323130;"></div>
<div style="position:absolute;left:1241.6px;top:690.2px;width:3.6px;height:3.6px;border-radius:50%;background:#323130;"></div>
<div style="position:absolute;left:1250.2px;top:690.2px;width:3.6px;height:3.6px;border-radius:50%;background:#323130;"></div>
<svg style="position:absolute;left:938px;top:751px;" width="27" height="25" viewBox="0 0 27 25"><g fill="none" stroke="#323130"><rect x="1.1" y="1.1" width="24.3" height="22" stroke-width="2.2"/>
<path d="M1.1 6.5 H25.4" stroke-width="2.4"/><path d="M1.1 12 H25.4 M1.1 17.5 H25.4 M9.2 6.5 V23 M17.3 6.5 V23" stroke-width="1.8"/></g></svg>
<div class="t" style="left:972.00px;top:753.55px;font-size:23.69px;font-weight:400;color:#323130;letter-spacing:-0.062px;">CreditCard</div>
<div style="position:absolute;left:1233.0px;top:762.1px;width:3.6px;height:3.6px;border-radius:50%;background:#323130;"></div>
<div style="position:absolute;left:1241.6px;top:762.1px;width:3.6px;height:3.6px;border-radius:50%;background:#323130;"></div>
<div style="position:absolute;left:1250.2px;top:762.1px;width:3.6px;height:3.6px;border-radius:50%;background:#323130;"></div>
<svg style="position:absolute;left:938px;top:823px;" width="27" height="25" viewBox="0 0 27 25"><g fill="none" stroke="#323130"><rect x="1.1" y="1.1" width="24.3" height="22" stroke-width="2.2"/>
<path d="M1.1 6.5 H25.4" stroke-width="2.4"/><path d="M1.1 12 H25.4 M1.1 17.5 H25.4 M9.2 6.5 V23 M17.3 6.5 V23" stroke-width="1.8"/></g></svg>
<div class="t" style="left:972.00px;top:825.45px;font-size:23.69px;font-weight:400;color:#323130;letter-spacing:0.081px;">CustomerInfo</div>
<div style="position:absolute;left:1233.0px;top:834.0px;width:3.6px;height:3.6px;border-radius:50%;background:#323130;"></div>
<div style="position:absolute;left:1241.6px;top:834.0px;width:3.6px;height:3.6px;border-radius:50%;background:#323130;"></div>
<div style="position:absolute;left:1250.2px;top:834.0px;width:3.6px;height:3.6px;border-radius:50%;background:#323130;"></div>
<svg style="position:absolute;left:938px;top:895px;" width="27" height="25" viewBox="0 0 27 25"><g fill="none" stroke="#323130"><rect x="1.1" y="1.1" width="24.3" height="22" stroke-width="2.2"/>
<path d="M1.1 6.5 H25.4" stroke-width="2.4"/><path d="M1.1 12 H25.4 M1.1 17.5 H25.4 M9.2 6.5 V23 M17.3 6.5 V23" stroke-width="1.8"/></g></svg>
<div class="t" style="left:972.00px;top:897.35px;font-size:23.69px;font-weight:400;color:#323130;letter-spacing:-0.221px;">CustomMeasu...</div>
<div style="position:absolute;left:1233.0px;top:905.9px;width:3.6px;height:3.6px;border-radius:50%;background:#323130;"></div>
<div style="position:absolute;left:1241.6px;top:905.9px;width:3.6px;height:3.6px;border-radius:50%;background:#323130;"></div>
<div style="position:absolute;left:1250.2px;top:905.9px;width:3.6px;height:3.6px;border-radius:50%;background:#323130;"></div>
<svg style="position:absolute;left:938px;top:966px;" width="27" height="25" viewBox="0 0 27 25"><g fill="none" stroke="#323130"><rect x="1.1" y="1.1" width="24.3" height="22" stroke-width="2.2"/>
<path d="M1.1 6.5 H25.4" stroke-width="2.4"/><path d="M1.1 12 H25.4 M1.1 17.5 H25.4 M9.2 6.5 V23 M17.3 6.5 V23" stroke-width="1.8"/></g></svg>
<div class="t" style="left:972.00px;top:969.25px;font-size:23.69px;font-weight:400;color:#323130;letter-spacing:-0.027px;">DateMaster</div>
<div style="position:absolute;left:1233.0px;top:977.8px;width:3.6px;height:3.6px;border-radius:50%;background:#323130;"></div>
<div style="position:absolute;left:1241.6px;top:977.8px;width:3.6px;height:3.6px;border-radius:50%;background:#323130;"></div>
<div style="position:absolute;left:1250.2px;top:977.8px;width:3.6px;height:3.6px;border-radius:50%;background:#323130;"></div>
<svg style="position:absolute;left:938px;top:1038px;" width="27" height="25" viewBox="0 0 27 25"><g fill="none" stroke="#323130"><rect x="1.1" y="1.1" width="24.3" height="22" stroke-width="2.2"/>
<path d="M1.1 6.5 H25.4" stroke-width="2.4"/><path d="M1.1 12 H25.4 M1.1 17.5 H25.4 M9.2 6.5 V23 M17.3 6.5 V23" stroke-width="1.8"/></g></svg>
<div class="t" style="left:972.00px;top:1041.15px;font-size:23.69px;font-weight:400;color:#323130;letter-spacing:-0.325px;">ExitCustomer</div>
<div style="position:absolute;left:1233.0px;top:1049.7px;width:3.6px;height:3.6px;border-radius:50%;background:#323130;"></div>
<div style="position:absolute;left:1241.6px;top:1049.7px;width:3.6px;height:3.6px;border-radius:50%;background:#323130;"></div>
<div style="position:absolute;left:1250.2px;top:1049.7px;width:3.6px;height:3.6px;border-radius:50%;background:#323130;"></div>
<svg style="position:absolute;left:938px;top:1110px;" width="27" height="25" viewBox="0 0 27 25"><g fill="none" stroke="#323130"><rect x="1.1" y="1.1" width="24.3" height="22" stroke-width="2.2"/>
<path d="M1.1 6.5 H25.4" stroke-width="2.4"/><path d="M1.1 12 H25.4 M1.1 17.5 H25.4 M9.2 6.5 V23 M17.3 6.5 V23" stroke-width="1.8"/></g></svg>
<div class="t" style="left:972.00px;top:1113.05px;font-size:23.69px;font-weight:400;color:#323130;letter-spacing:-0.304px;">Gender</div>
<div style="position:absolute;left:1233.0px;top:1121.6px;width:3.6px;height:3.6px;border-radius:50%;background:#323130;"></div>
<div style="position:absolute;left:1241.6px;top:1121.6px;width:3.6px;height:3.6px;border-radius:50%;background:#323130;"></div>
<div style="position:absolute;left:1250.2px;top:1121.6px;width:3.6px;height:3.6px;border-radius:50%;background:#323130;"></div>
<div style="position:absolute;left:924.5px;top:1160px;width:342.8px;height:67px;box-sizing:border-box;border:2.5px solid #555;border-radius:5px;background:#ebebeb;"></div>
<svg style="position:absolute;left:940px;top:1182px;" width="27" height="25" viewBox="0 0 27 25"><g fill="none" stroke="#323130"><rect x="1.1" y="1.1" width="24.3" height="22" stroke-width="2.2"/>
<path d="M1.1 6.5 H25.4" stroke-width="2.4"/><path d="M1.1 12 H25.4 M1.1 17.5 H25.4 M9.2 6.5 V23 M17.3 6.5 V23" stroke-width="1.8"/></g></svg>
<div class="t" style="left:974.00px;top:1184.25px;font-size:23.69px;font-weight:400;color:#323130;letter-spacing:-0.095px;">Geography</div>
<svg style="position:absolute;left:1197px;top:1184px;" width="26" height="24" viewBox="0 0 26 24"><path d="M1.5 1.5 H24 L15.5 11.5 V22.5 H10 V11.5 Z" fill="none" stroke="#323130" stroke-width="2" stroke-linejoin="miter"/></svg>
<div style="position:absolute;left:1231.3px;top:1193.4px;width:3.6px;height:3.6px;border-radius:50%;background:#323130;"></div>
<div style="position:absolute;left:1239.9px;top:1193.4px;width:3.6px;height:3.6px;border-radius:50%;background:#323130;"></div>
<div style="position:absolute;left:1248.5px;top:1193.4px;width:3.6px;height:3.6px;border-radius:50%;background:#323130;"></div>
<svg style="position:absolute;left:1337px;top:571px;" width="33" height="33" viewBox="0 0 33 33"><rect x="1" y="1" width="30" height="30" fill="none" stroke="#323130" stroke-width="1.6" stroke-dasharray="2 2"/>
<g fill="none" stroke="#323130" stroke-width="2"><rect x="7.5" y="7.5" width="17" height="17"/><path d="M16 7.5 V24.5 M7.5 16 H24.5"/></g></svg>
<div class="t" style="left:1386.00px;top:575.19px;font-size:29.07px;font-weight:400;color:#323130;letter-spacing:-1.052px;">Select all</div>
<svg style="position:absolute;left:1615px;top:571px;" width="34" height="34" viewBox="0 0 34 34"><path d="M16.5 1 V33 M1 16.5 H33" stroke="#323130" stroke-width="2.3"/></svg>
<div class="t" style="left:1664.70px;top:575.19px;font-size:29.07px;font-weight:400;color:#323130;letter-spacing:-0.674px;">Add</div>
<svg style="position:absolute;left:1837px;top:571px;" width="28" height="33" viewBox="0 0 28 33"><g fill="none" stroke="#c2c2c2" stroke-width="2"><path d="M1 5.5 H26.5 M9 5.5 V1.5 H18.5 V5.5"/><path d="M3.5 5.5 V30.5 A1.5 1.5 0 0 0 5 32 H22.5 A1.5 1.5 0 0 0 24 30.5 V5.5"/>
<path d="M9.5 10 V27.5 M13.8 10 V27.5 M18 10 V27.5"/></g></svg>
<div class="t" style="left:1883.00px;top:575.59px;font-size:29.07px;font-weight:400;color:#c2c2c2;letter-spacing:-0.529px;">Delete</div>
<svg style="position:absolute;left:2084px;top:574px;" width="34" height="26" viewBox="0 0 34 26"><g fill="none" stroke="#c2c2c2" stroke-width="2.2"><rect x="10" y="1.5" width="22.5" height="22"/><path d="M10 12.5 H32.5"/>
<path d="M6 1.5 C2 1.5 2.5 5 2.5 8 C2.5 11 1 12.5 1 12.5 C1 12.5 2.5 14 2.5 17 C2.5 20 2 23.5 6 23.5"/></g></svg>
<div class="t" style="left:2132.80px;top:575.59px;font-size:29.07px;font-weight:400;color:#c2c2c2;letter-spacing:-0.528px;">Group</div>
<svg style="position:absolute;left:2331px;top:574px;" width="34" height="26" viewBox="0 0 34 26"><g fill="none" stroke="#c2c2c2" stroke-width="2.2"><rect x="10" y="1.5" width="22.5" height="22"/><path d="M10 12.5 H32.5"/>
<path d="M6 1.5 C2 1.5 2.5 5 2.5 8 C2.5 11 1 12.5 1 12.5 C1 12.5 2.5 14 2.5 17 C2.5 20 2 23.5 6 23.5"/></g></svg>
<div class="t" style="left:2378.70px;top:575.59px;font-size:29.07px;font-weight:400;color:#c2c2c2;">Ungroup</div>
<div style="position:absolute;left:1338px;top:607.5px;width:1168px;height:2.5px;background:#e0e0e0;"></div>
<div style="position:absolute;left:2174px;top:484.5px;width:331.5px;height:63px;box-sizing:border-box;border:2px solid #d1d1d1;border-radius:4px;background:#fff;"></div>
<div class="t" style="left:2207.00px;top:502.79px;font-size:29.07px;font-weight:400;color:#242424;letter-spacing:-0.097px;-webkit-text-stroke:0.6px currentColor;">Switch to DAX editor</div>
<div class="t" style="left:1338.00px;top:631.16px;font-size:32.41px;font-weight:400;color:#252423;letter-spacing:-0.739px;">Show data when...</div>
<div style="position:absolute;left:1338px;top:679.4px;width:1152px;height:79.2px;background:#fafafa;"></div>
<div style="position:absolute;left:1338.9px;top:687.8px;width:158.1px;height:62.5px;box-sizing:border-box;border:2px solid #7a7a7a;border-radius:4px;background:#fff;"></div>
<div class="t" style="left:1357.00px;top:708.15px;font-size:25.58px;font-weight:400;color:#605e5c;letter-spacing:-0.872px;">All</div>
<svg style="position:absolute;left:1459px;top:713px;" width="26" height="15" viewBox="0 0 26 15"><path d="M1.5 1.5 L12.8 13 L24 1.5" fill="none" stroke="#323130" stroke-width="2.2"/></svg>
<div class="t" style="left:1506.00px;top:706.42px;font-size:27.62px;font-weight:400;color:#252423;letter-spacing:0.036px;">of these rules are true</div>
<div style="position:absolute;left:1338px;top:767px;width:1152px;height:79.6px;background:#fafafa;"></div>
<div style="position:absolute;left:1364px;top:797.5px;width:4.2px;height:4.2px;background:#323130;"></div>
<div style="position:absolute;left:1364px;top:805px;width:4.2px;height:4.2px;background:#323130;"></div>
<div style="position:absolute;left:1364px;top:812.5px;width:4.2px;height:4.2px;background:#323130;"></div>
<div style="position:absolute;left:1372.5px;top:797.5px;width:4.2px;height:4.2px;background:#323130;"></div>
<div style="position:absolute;left:1372.5px;top:805px;width:4.2px;height:4.2px;background:#323130;"></div>
<div style="position:absolute;left:1372.5px;top:812.5px;width:4.2px;height:4.2px;background:#323130;"></div>
<div style="position:absolute;left:1454.7px;top:775.8px;width:198.6px;height:62.5px;box-sizing:border-box;border:2px solid #7a7a7a;border-radius:4px;background:#fff;"></div>
<div style="position:absolute;left:1470px;top:780px;width:145px;height:55px;overflow:hidden;">
<div class="t" style="left:1.00px;top:15.55px;font-size:25.58px;font-weight:400;color:#605e5c;">GeographyLocation</div>
</div>
<svg style="position:absolute;left:1615px;top:800px;" width="26" height="15" viewBox="0 0 26 15"><path d="M1.5 1.5 L12.8 13 L24 1.5" fill="none" stroke="#323130" stroke-width="2.2"/></svg>
<div style="position:absolute;left:1662.5px;top:775.8px;width:198.5px;height:62.5px;box-sizing:border-box;border:2px solid #7a7a7a;border-radius:4px;background:#fff;"></div>
<div class="t" style="left:1678.60px;top:795.55px;font-size:25.58px;font-weight:400;color:#605e5c;letter-spacing:-1.764px;">Equals</div>
<svg style="position:absolute;left:1823px;top:800px;" width="26" height="15" viewBox="0 0 26 15"><path d="M1.5 1.5 L12.8 13 L24 1.5" fill="none" stroke="#323130" stroke-width="2.2"/></svg>
<div style="position:absolute;left:1870.6px;top:775.3px;width:353.7px;height:62.5px;box-sizing:border-box;border:2px solid #7a7a7a;border-radius:4px;background:#fff;"></div>
<div class="t" style="left:1887.00px;top:796.42px;font-size:27.62px;font-weight:400;color:#323130;letter-spacing:0.398px;">Illinois</div>
<div style="position:absolute;left:2235px;top:1376.2px;width:122.8px;height:63.6px;background:#f0f0f0;border-radius:7px;"></div>
<div class="t" style="left:2266.60px;top:1395.19px;font-size:29.07px;font-weight:400;color:#bdbdbd;letter-spacing:-2.160px;-webkit-text-stroke:0.6px currentColor;">Save</div>
<div style="position:absolute;left:2374.4px;top:1376.2px;width:135px;height:63.6px;box-sizing:border-box;border:2px solid #c8c8c8;border-radius:7px;background:#fff;"></div>
<div class="t" style="left:2407.60px;top:1394.95px;font-size:29.36px;font-weight:400;color:#242424;letter-spacing:-1.708px;-webkit-text-stroke:0.6px currentColor;">Close</div>
<div style="position:absolute;left:899px;top:135px;width:101px;height:137px;box-sizing:border-box;border:5px solid #e8412c;border-radius:25px;"></div>
<div style="position:absolute;left:490px;top:537px;width:212px;height:100px;box-sizing:border-box;border:5px solid #e8412c;border-radius:26px;"></div>
<div style="position:absolute;left:2146.5px;top:472px;width:400px;height:82.5px;box-sizing:border-box;border:5px solid #e8412c;border-radius:25px;"></div>
</body></html>
